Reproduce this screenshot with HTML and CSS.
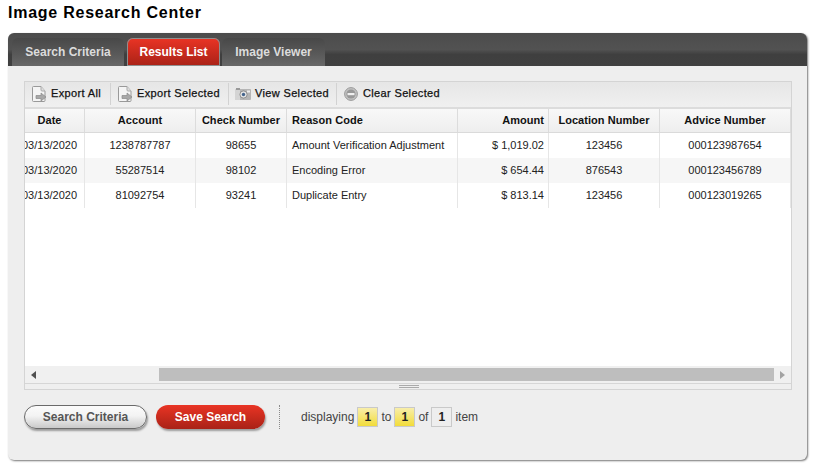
FILE: index.html
```html
<!DOCTYPE html>
<html lang="en">
<head>
<meta charset="utf-8">
<title>Image Research Center</title>
<link rel="stylesheet" href="styles.css">
</head>
<body>
<h1 class="title">Image Research Center</h1>
<section class="panel">
  <nav class="tabs">
    <span class="tab">Search Criteria</span>
    <span class="tab tab-active">Results List</span>
    <span class="tab tab-last">Image Viewer</span>
  </nav>
  <div class="content">
    <div class="grid">
      <div class="toolbar">
        <button class="tool tool-a">
          <svg class="ico" width="16" height="18" viewBox="0 0 16 18"><path d="M1.500 2.500q0-1 1-1h7.500l4 4.500v9.500q0 1-1 1h-10.500q-1 0-1-1z" fill="#f4f4f4" stroke="#999"/><path d="M10 1.500v3.500q0 1 1 1h3" fill="#dedede" stroke="#aaa"/><path d="M5 10.500h5v-2.500l5 4-5 4v-2.500h-5z" fill="#a8a8a8" stroke="#8a8a8a" stroke-width=".7"/></svg>
          Export All</button>
        <button class="tool tool-b">
          <svg class="ico" width="16" height="18" viewBox="0 0 16 18"><path d="M1.500 2.500q0-1 1-1h7.500l4 4.500v9.500q0 1-1 1h-10.500q-1 0-1-1z" fill="#f4f4f4" stroke="#999"/><path d="M10 1.500v3.500q0 1 1 1h3" fill="#dedede" stroke="#aaa"/><path d="M5 10.500h5v-2.500l5 4-5 4v-2.500h-5z" fill="#a8a8a8" stroke="#8a8a8a" stroke-width=".7"/></svg>
          Export Selected</button>
        <button class="tool tool-c">
          <svg class="ico" width="16" height="12" viewBox="0 0 16 12"><rect x="0" y="1" width="16" height="11" rx="1" fill="#b5b5b5"/><rect x="0" y="1" width="5" height="11" fill="#d4d4d4"/><rect x="1" y="0" width="4" height="2" fill="#999"/><rect x="12" y="2.500" width="3" height="2" fill="#eee"/><circle cx="8.500" cy="6.500" r="3.600" fill="#e6e6e6" stroke="#808080" stroke-width=".8"/><circle cx="8.500" cy="6.500" r="1.700" fill="#44648c"/></svg>
          View Selected</button>
        <button class="tool tool-d">
          <svg class="ico" width="14" height="14" viewBox="0 0 14 14"><circle cx="7" cy="7" r="6.400" fill="#c2c2c2" stroke="#9a9a9a"/><circle cx="7" cy="7" r="4.600" fill="#989898"/><rect x="3.500" y="6" width="7" height="2.200" fill="#f0f0f0"/></svg>
          Clear Selected</button>
      </div>
      <div class="viewport">
        <div class="row head">
          <div class="cell c">Date</div>
          <div class="cell c">Account</div>
          <div class="cell c">Check Number</div>
          <div class="cell l">Reason Code</div>
          <div class="cell r">Amount</div>
          <div class="cell c">Location Number</div>
          <div class="cell c">Advice Number</div>
        </div>
        <div class="row">
          <div class="cell c">03/13/2020</div>
          <div class="cell c">1238787787</div>
          <div class="cell c">98655</div>
          <div class="cell l">Amount Verification Adjustment</div>
          <div class="cell r">$ 1,019.02</div>
          <div class="cell c">123456</div>
          <div class="cell c">000123987654</div>
        </div>
        <div class="row alt">
          <div class="cell c">03/13/2020</div>
          <div class="cell c">55287514</div>
          <div class="cell c">98102</div>
          <div class="cell l">Encoding Error</div>
          <div class="cell r">$ 654.44</div>
          <div class="cell c">876543</div>
          <div class="cell c">000123456789</div>
        </div>
        <div class="row">
          <div class="cell c">03/13/2020</div>
          <div class="cell c">81092754</div>
          <div class="cell c">93241</div>
          <div class="cell l">Duplicate Entry</div>
          <div class="cell r">$ 813.14</div>
          <div class="cell c">123456</div>
          <div class="cell c">000123019265</div>
        </div>
      </div>
      <div class="scrollbar">
        <span class="arrow arrow-left"></span>
        <span class="track"><span class="thumb"></span></span>
        <span class="arrow arrow-right"></span>
      </div>
      <div class="splitter"><span class="grip"></span></div>
    </div>
    <div class="actions">
      <button class="pill pill-grey">Search Criteria</button>
      <button class="pill pill-red">Save Search</button>
      <div class="pager">
        <span>displaying</span><span class="num num-y">1</span><span>to</span><span class="num num-y">1</span><span>of</span><span class="num">1</span><span>item</span>
      </div>
    </div>
  </div>
</section>
</body>
</html>
```
FILE: styles.css
```css
* { box-sizing: border-box; }
html, body { margin: 0; height: 100%; background: #fff; overflow: hidden; }
body {
  padding: 0 8px;
  font-family: "Liberation Sans", Arial, sans-serif;
  color: #222;
}
.title {
  margin: 0;
  height: 33px;
  padding-top: 3px;
  font-size: 16px;
  line-height: 19px;
  font-weight: bold;
  letter-spacing: .75px;
  color: #000;
}
.panel {
  width: 799px;
  height: 427px;
  border-radius: 6px;
  background: #eee;
  box-shadow: 1px 1px 2px #777;
  overflow: hidden;
}
.tabs {
  height: 33px;
  display: flex;
  align-items: flex-end;
  padding-left: 4px;
  background: linear-gradient(#4c4c4c 0, #525252 50%, #3f3f3f 65%, #404040 100%);
}
.tab {
  height: 28px;
  padding-top: 6px;
  width: 112px;
  text-align: center;
  font-size: 12px;
  line-height: 16px;
  font-weight: bold;
  color: #dcdcdc;
  border-radius: 6px 6px 0 0;
  background: linear-gradient(#484848, #5a5a5a 60%, #686868);
}
.tab-active {
  width: 93px;
  margin-left: 3px;
  color: #fff;
  background: linear-gradient(#ea3425, #a92217);
  box-shadow: 0 0 0 1px #8f8f8f inset;
}
.tab-last { width: 103px; margin-left: 2px; }
.content { padding: 15px 16px 0 16px; }
.grid {
  width: 768px;
  height: 309px;
  border: 1px solid #d4d4d4;
  background: #fff;
  display: flex;
  flex-direction: column;
}
.toolbar {
  height: 27px;
  flex: none;
  display: flex;
  align-items: flex-start;
  padding-top: 1px;
  background: linear-gradient(#e6e6e6, #f0f0f0);
  border-bottom: 2px solid #dcdcdc;
}
.tool {
  height: 22px;
  display: flex;
  align-items: center;
  border: 0;
  border-right: 1px solid #d2d2d2;
  background: none;
  padding: 0 0 2px 6px;
  font: 11px "Liberation Sans", Arial, sans-serif;
  letter-spacing: .35px;
  color: #111;
  -webkit-text-stroke: .25px #111;
}
.tool .ico { margin: 2px 4px 0 0; }
.tool-a { width: 86px; }
.tool-b { width: 118px; }
.tool-c { width: 108px; }
.tool-d { padding-left: 7px; border-right: 0; }
.tool-d .ico { margin-right: 5px; }
.viewport {
  flex: 1;
  overflow: hidden;
  background: #fff;
}
.row {
  display: grid;
  grid-template-columns: 70px 111px 91px 171px 91px 111px 131px;
  margin-left: -10px;
  height: 25px;
  font-size: 11px;
  line-height: 24px;
  color: #222;
}
.alt { background: #f6f6f6; }
.cell { border-right: 1px solid #e6e6e6; padding: 0 5px; white-space: nowrap; }
.c { text-align: center; }
.l { text-align: left; }
.r { text-align: right; padding-right: 4px; }
.head {
  height: 24px;
  background: linear-gradient(#f8f8f8, #eeeeee);
  border-bottom: 1px solid #dadada;
  font-weight: bold;
  letter-spacing: .05px;
  line-height: 22px;
  color: #111;
}
.head .cell { border-right-color: #dcdcdc; }
.scrollbar {
  height: 17px;
  flex: none;
  display: flex;
  align-items: flex-start;
  padding-top: 2px;
  background: #f0f0f0;
}
.arrow { width: 17px; height: 13px; flex: none; display: flex; justify-content: center; align-items: center; }
.arrow-left::before { content: ""; border: 4px solid transparent; border-left: 0; border-right: 5px solid #505050; }
.arrow-right::before { content: ""; border: 4px solid transparent; border-right: 0; border-left: 5px solid #a3a3a3; }
.track { flex: 1; height: 13px; display: flex; }
.thumb { width: 100%; margin-left: 117px; background: #bebebe; }
.splitter {
  height: 6px;
  flex: none;
  background: #efefef;
  border-top: 1px solid #d6d6d6;
  display: flex;
  justify-content: center;
  padding-top: 1px;
}
.grip { width: 20px; height: 3px; margin-left: 1px; border-top: 1px solid #aaa; border-bottom: 1px solid #aaa; }
.actions {
  display: flex;
  align-items: center;
  height: 24px;
  margin-top: 15px;
}
.pill {
  height: 24px;
  border-radius: 12px;
  font: bold 12px "Liberation Sans", Arial, sans-serif;
  padding: 0;
  box-shadow: 1px 2px 2px rgba(0,0,0,.35);
}
.pill-grey {
  width: 123px;
  color: #555;
  border: 1px solid #6a6a6a;
  background: linear-gradient(#fbfbfb, #f3f3f3 45%, #c9c9c9);
}
.pill-red {
  width: 109px;
  margin-left: 9px;
  color: #fff;
  border: 0;
  background: linear-gradient(#e93424, #a92217);
}
.pager {
  display: flex;
  align-items: center;
  gap: 3px;
  height: 24px;
  margin-left: 14px;
  padding-left: 21px;
  border-left: 1px dotted #8a8a8a;
  font-size: 12px;
  color: #444;
}
.num {
  width: 21px;
  height: 20px;
  border: 1px solid #c9c9c9;
  text-align: center;
  line-height: 18px;
  font-weight: bold;
  color: #222;
}
.num-y { background: linear-gradient(#f8eeaa, #f2dc3a); }
```
